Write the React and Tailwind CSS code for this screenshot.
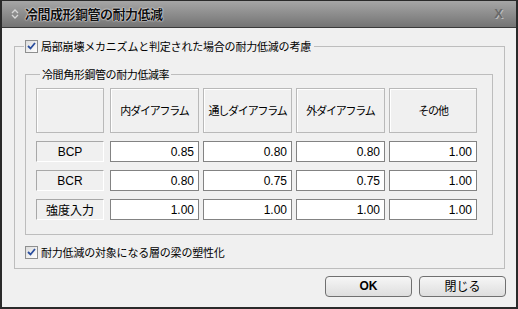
import React from "react";

const JP = { fontFamily: '"Noto Sans CJK JP", "Liberation Sans", sans-serif' };
const NUM = { fontFamily: '"Liberation Sans", Arial, sans-serif' };

const COLS = ["内ダイアフラム", "通しダイアフラム", "外ダイアフラム", "その他"];
const ROWS = [
  { label: "BCP", values: ["0.85", "0.80", "0.80", "1.00"] },
  { label: "BCR", values: ["0.80", "0.75", "0.75", "1.00"] },
  { label: "強度入力", values: ["1.00", "1.00", "1.00", "1.00"] },
];

function Check() {
  return (
    <span className="inline-flex items-center justify-center w-[13px] h-[13px] border border-[#8e8f8f] bg-gradient-to-br from-[#dcdcdc] to-white shrink-0">
      <svg width="9" height="8" viewBox="0 0 9 8">
        <path d="M1 4 L3.5 6.5 L8 1" fill="none" stroke="#2a4e9e" strokeWidth="1.8" />
      </svg>
    </span>
  );
}

export default function App() {
  return (
    <div className="w-[518px] h-[309px] flex flex-col border-2 border-t border-[#2a2a2a] bg-[#f0f0f0] text-[11px] text-black" style={JP}>
      {/* title bar */}
      <div className="h-[27px] flex items-center bg-gradient-to-b from-[#a6a6a6] to-[#747474] border-b border-[#3a3a3a] shrink-0">
        <svg className="ml-[8px]" width="10" height="12" viewBox="0 0 10 12">
          <path d="M2 5 L5 2 L8 5" fill="none" stroke="#d8d8d8" strokeWidth="1.3" />
          <path d="M2 7 L5 10 L8 7" fill="none" stroke="#d8d8d8" strokeWidth="1.3" />
        </svg>
        <span className="ml-[5px] font-bold text-[13px] tracking-[-0.5px] text-[#111]" style={{ textShadow: "0 0 2px #fff, 0 0 1px #fff" }}>
          冷間成形鋼管の耐力低減
        </span>
        <span className="ml-auto mr-[13px] text-[13px] text-[#6a6a6a] font-bold" style={{ ...NUM, textShadow: "1px 1px 0 #bdbdbd" }}>
          X
        </span>
      </div>

      {/* body */}
      <div className="flex-1 flex flex-col">
        <fieldset className="ml-[12px] mt-[11px] w-[491px] border border-[#bdbdbd] p-0 pb-[7px]">
          <legend className="ml-[9px] pl-px pr-[3px] flex items-center gap-[3px] h-[14px] leading-[14px]">
            <Check />
            <span className="tracking-[-0.2px]">局部崩壊メカニズムと判定された場合の耐力低減の考慮</span>
          </legend>

          <fieldset className="ml-[10px] mt-[14px] w-[468px] border border-[#bdbdbd] p-0 pl-[10px] pb-[14px]">
            <legend className="ml-[4px] px-[2px] h-[14px] leading-[14px] tracking-[-0.4px]">冷間角形鋼管の耐力低減率</legend>

            <div className="mt-[7px] grid grid-cols-[70px_89px_89px_89px_88px] gap-x-[4px] gap-y-[8px] [&>*:nth-child(5n+1)]:mr-[2px]">
              <div className="h-[45px] border border-[#b9b9b9] shadow-[inset_1px_1px_0_#fff]" />
              {COLS.map((c) => (
                <div key={c} className="h-[45px] flex items-center justify-center whitespace-nowrap tracking-[-1.2px] border border-[#b9b9b9] shadow-[inset_1px_1px_0_#fff]">
                  {c}
                </div>
              ))}
              {ROWS.map((r) => (
                <React.Fragment key={r.label}>
                  <div className="h-[21px] flex items-center justify-center text-[12px] border border-t-[#a8a8a8] border-l-[#a8a8a8] border-r-white border-b-white" style={r.label === "強度入力" ? JP : NUM}>
                    {r.label}
                  </div>
                  {r.values.map((v, i) => (
                    <div key={i} className="h-[21px] flex items-center justify-end pr-[4px] text-[12px] bg-white border border-[#838383]" style={NUM}>
                      {v}
                    </div>
                  ))}
                </React.Fragment>
              ))}
            </div>
          </fieldset>

          <div className="mt-[9px] ml-[10px] flex items-center gap-[3px]">
            <Check />
            <span className="tracking-[-0.2px]">耐力低減の対象になる層の梁の塑性化</span>
          </div>
        </fieldset>

        <div className="mt-[7px] flex justify-end gap-[7px] pr-[10px]">
          <button className="w-[87px] h-[21px] rounded-[4px] border border-[#707070] bg-gradient-to-b from-[#f6f6f6] to-[#dedede] font-bold text-[12px]" style={NUM}>
            OK
          </button>
          <button className="w-[87px] h-[21px] rounded-[4px] border border-[#707070] bg-gradient-to-b from-[#f6f6f6] to-[#dedede] text-[12px]">
            閉じる
          </button>
        </div>
      </div>
    </div>
  );
}
